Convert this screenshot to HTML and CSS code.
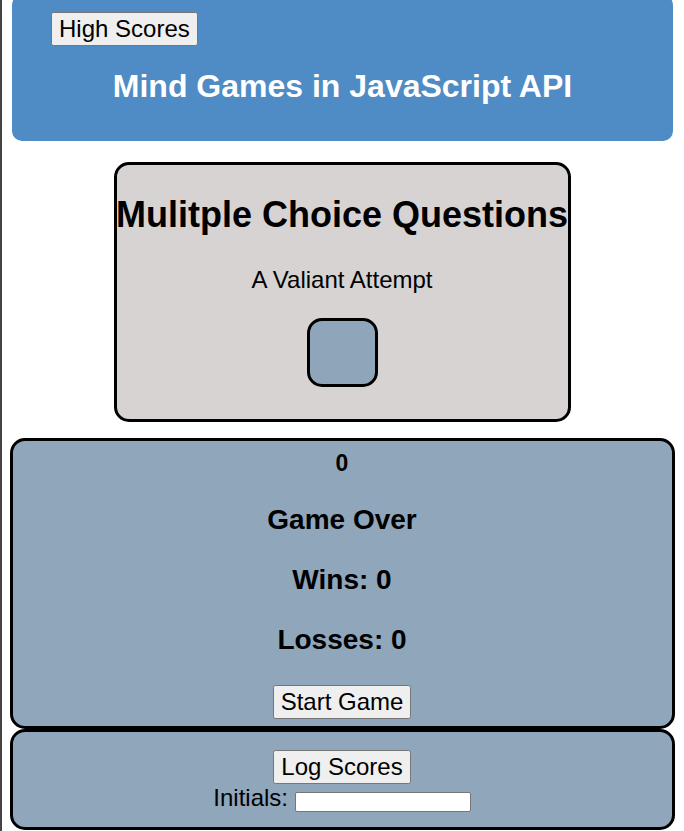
FILE: index.html
```html
<!DOCTYPE html>
<html lang="en">
<head>
<meta charset="utf-8">
<title>Mind Games in JavaScript API</title>
<link rel="stylesheet" href="styles.css">
</head>
<body>
  <header class="top">
    <button class="btn" type="button">High Scores</button>
    <h1 class="title">Mind Games in JavaScript API</h1>
  </header>

  <main class="page">
    <section class="card">
      <h2 class="card-title">Mulitple Choice Questions</h2>
      <p class="card-sub">A Valiant Attempt</p>
      <div class="tile"></div>
    </section>

    <section class="game">
      <div class="score">0</div>
      <h3 class="status">Game Over</h3>
      <h3 class="status">Wins: 0</h3>
      <h3 class="status">Losses: 0</h3>
      <button class="btn start" type="button">Start Game</button>
    </section>

    <section class="log">
      <button class="btn" type="button">Log Scores</button>
      <div class="initials"><label for="ini">Initials:</label> <input id="ini" class="ini-input" type="text"></div>
    </section>
  </main>
</body>
</html>
```

FILE: styles.css
```css
html {
  background: linear-gradient(to right, #444 2px, #fff 2px);
}

body {
  margin: 0;
  font-family: "Liberation Sans", Arial, sans-serif;
  color: #000;
}

.btn {
  font-family: "Liberation Sans", Arial, sans-serif;
  font-size: 24px;
  line-height: 28px;
  color: #000;
}

.top {
  margin: -5px 11px 0 12px;
  padding: 17px 0 37px 39px;
  background: #4f8bc5;
  border-radius: 10px;
  display: flex;
  flex-direction: column;
  align-items: flex-start;
}

.title {
  align-self: stretch;
  margin: 22px 0 0 -39px;
  text-align: center;
  color: #fff;
  font-size: 32px;
  line-height: 36px;
  font-weight: bold;
}

.page {
  display: flex;
  flex-direction: column;
  align-items: center;
  padding-top: 21px;
}

.card {
  width: 451px;
  box-sizing: content-box;
  padding: 30px 0 32px;
  background: #d7d3d3;
  border: 3px solid #000;
  border-radius: 15px;
  display: flex;
  flex-direction: column;
  align-items: center;
}

.card-title {
  margin: 0;
  font-size: 36px;
  line-height: 40px;
  font-weight: bold;
  white-space: nowrap;
}

.card-sub {
  margin: 31px 0 0;
  font-size: 24px;
  line-height: 28px;
}

.tile {
  margin-top: 24px;
  width: 65px;
  height: 63px;
  background: #8fa5ba;
  border: 3px solid #000;
  border-radius: 15px;
}

.game {
  margin-top: 16px;
  width: 659px;
  padding: 8px 0 7px;
  background: #8fa6bb;
  border: 3px solid #000;
  border-radius: 15px;
  display: flex;
  flex-direction: column;
  align-items: center;
}

.score {
  font-size: 23px;
  line-height: 28px;
  font-weight: bold;
}

.status {
  margin: 28px 0 0;
  font-size: 28px;
  line-height: 32px;
  font-weight: bold;
}

.status:first-of-type {
  margin-top: 27px;
}

.start {
  margin-top: 29px;
}

.log {
  width: 659px;
  padding: 18px 0 15px;
  background: #8fa6bb;
  border: 3px solid #000;
  border-radius: 15px;
  display: flex;
  flex-direction: column;
  align-items: center;
}

.initials {
  font-size: 24px;
  line-height: 28px;
}

.ini-input {
  width: 176px;
  height: 20px;
  box-sizing: border-box;
  font-size: 13px;
  border: 1px solid #767676;
  border-radius: 2px;
  background: #fff;
  padding: 1px 2px;
}
```
